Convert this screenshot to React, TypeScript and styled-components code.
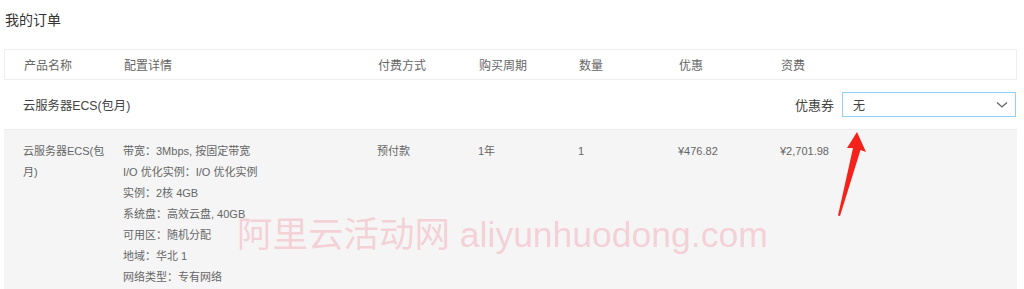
import React from 'react';
import styled, { createGlobalStyle } from 'styled-components';

const GlobalStyle = createGlobalStyle`
  html, body {
    margin: 0;
    padding: 0;
    background: #fff;
  }
  body {
    font-family: "Liberation Sans", "Noto Sans CJK SC", Arial, sans-serif;
    color: #333;
  }
`;

const COLS = '100px 254px 101px 100px 100px 102px 1fr';

const Page = styled.div`
  position: relative;
  width: 1024px;
  height: 289px;
  overflow: hidden;
  padding: 0 7px 0 4px;
  box-sizing: border-box;
`;

const Title = styled.h2`
  margin: 0;
  height: 49px;
  padding: 11px 0 0 1px;
  box-sizing: border-box;
  font-size: 14px;
  font-weight: normal;
  color: #333;
  line-height: 18px;
`;

const HeaderRow = styled.div`
  display: grid;
  grid-template-columns: ${COLS};
  height: 31px;
  align-items: center;
  padding-left: 19px;
  border: 1px solid #eee;
  box-sizing: border-box;
  font-size: 12px;
  color: #666;
`;

const GroupRow = styled.div`
  display: flex;
  align-items: center;
  justify-content: space-between;
  height: 50px;
  padding: 0 1px 0 19px;
  border-bottom: 1px solid #eee;
  box-sizing: border-box;
  font-size: 12.3px;
  color: #444;
`;

const Coupon = styled.div`
  display: flex;
  align-items: center;
  gap: 8px;
  font-size: 13px;
  color: #444;
`;

const Select = styled.div`
  width: 174px;
  height: 25px;
  box-sizing: border-box;
  border: 1px solid #8fd3f2;
  display: flex;
  align-items: center;
  justify-content: space-between;
  padding: 0 7px 0 10px;
  font-size: 12px;
  color: #444;
  background: #fff;
`;

const DataRow = styled.div`
  display: grid;
  grid-template-columns: ${COLS};
  background: #f5f5f5;
  padding: 11px 0 0 19px;
  height: 160px;
  box-sizing: border-box;
  font-size: 11px;
  line-height: 21px;
  color: #666;
`;

const Cell = styled.div<{ $wrap?: boolean }>`
  padding-right: ${p => (p.$wrap ? '18px' : '0')};
  white-space: ${p => (p.$wrap ? 'normal' : 'nowrap')};
  word-break: break-all;
  line-break: anywhere;
`;

const DetailList = styled.div`
  display: flex;
  flex-direction: column;
`;

const Watermark = styled.div`
  position: absolute;
  left: 237px;
  top: 215px;
  font-size: 35.5px;
  line-height: 40px;
  color: rgba(240, 120, 140, 0.3);
  white-space: nowrap;
  pointer-events: none;
`;

const Arrow = styled.svg`
  position: absolute;
  left: 832px;
  top: 128px;
`;

const headers = ['产品名称', '配置详情', '付费方式', '购买周期', '数量', '优惠', '资费'];

const details = [
  '带宽：3Mbps, 按固定带宽',
  'I/O 优化实例：I/O 优化实例',
  '实例：2核 4GB',
  '系统盘：高效云盘, 40GB',
  '可用区：随机分配',
  '地域：华北 1',
  '网络类型：专有网络',
];

export default function App() {
  return (
    <Page>
      <GlobalStyle />
      <Title>我的订单</Title>
      <HeaderRow>
        {headers.map(h => (
          <div key={h}>{h}</div>
        ))}
      </HeaderRow>
      <GroupRow>
        <span>云服务器ECS(包月)</span>
        <Coupon>
          <span>优惠券</span>
          <Select>
            <span>无</span>
            <svg width="12" height="8" viewBox="0 0 12 8">
              <path d="M1 1.5 L6 6 L11 1.5" fill="none" stroke="#666" strokeWidth="1.3" />
            </svg>
          </Select>
        </Coupon>
      </GroupRow>
      <DataRow>
        <Cell $wrap>云服务器ECS(包月)</Cell>
        <DetailList>
          {details.map(d => (
            <div key={d}>{d}</div>
          ))}
        </DetailList>
        <Cell>预付款</Cell>
        <Cell>1年</Cell>
        <Cell>1</Cell>
        <Cell>¥476.82</Cell>
        <Cell>¥2,701.98</Cell>
      </DataRow>
      <Watermark>阿里云活动网 aliyunhuodong.com</Watermark>
      <Arrow width="40" height="92" viewBox="0 0 40 92">
        <path d="M25 4 L34 24 L28.5 22 L8 88 L6 87.5 L21 20 L15 20 Z" fill="#f5221b" />
      </Arrow>
    </Page>
  );
}
